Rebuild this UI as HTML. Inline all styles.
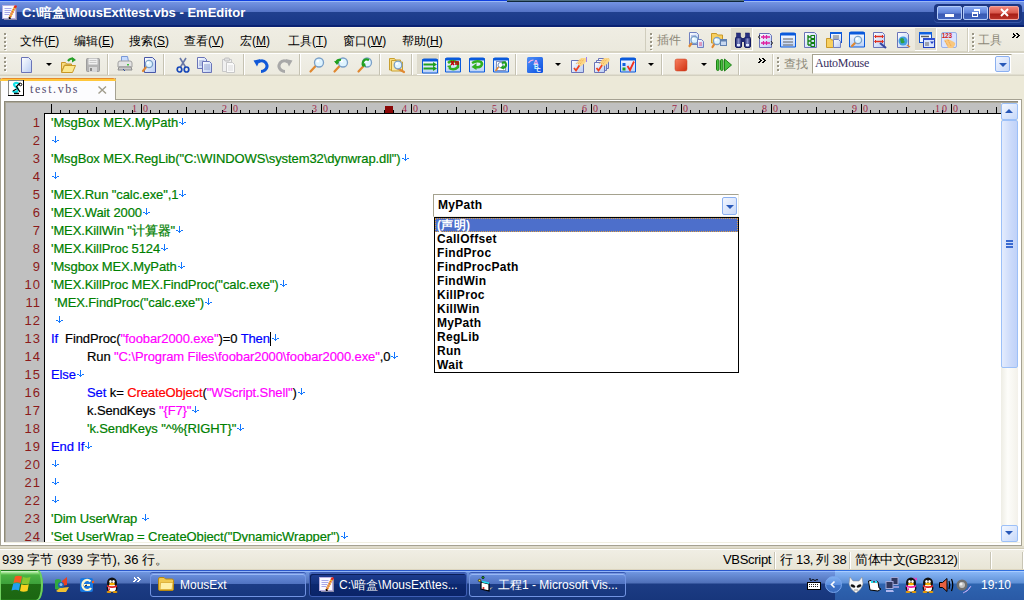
<!DOCTYPE html><html><head><meta charset="utf-8"><style>
*{margin:0;padding:0;box-sizing:border-box}
html,body{width:1024px;height:600px;overflow:hidden;background:#ECE9D8;font-family:"Liberation Sans",sans-serif;position:relative}
.a{position:absolute}
svg{position:absolute;overflow:visible}
.menu{position:absolute;top:33px;font-size:12px;line-height:14px;color:#000;white-space:nowrap}
.grip{position:absolute;width:2px;background:repeating-linear-gradient(#9A9686 0,#9A9686 2px,transparent 2px,transparent 4px);filter:drop-shadow(1px 1px 0 #fff)}
.sep{position:absolute;width:2px;height:21px;border-left:1px solid #C5C2B2;border-right:1px solid #fff}
.dd{position:absolute;width:0;height:0;border-left:3px solid transparent;border-right:3px solid transparent;border-top:3px solid #000}
.ln{position:absolute;left:0;width:35px;text-align:right;color:#8B1A1A;font-size:13px;line-height:18px;letter-spacing:1px}
.cl{position:absolute;left:6px;font-size:13px;line-height:18px;white-space:pre;color:#000;letter-spacing:-0.1px;-webkit-text-stroke:0.2px currentColor}
.tab{display:inline-block;width:36px}
.g{color:#008000}.b{color:#0000FF}.m{color:#FF00FF}.r{color:#FF0000}
.ar{display:inline-block;position:relative;width:8px;height:7px;vertical-align:2px;margin-left:1px}
.ar0{margin-left:1px}
.ar i{position:absolute;left:0;top:0;width:1px;height:1px;box-shadow:3px 0 #1478FF,3px 1px #1478FF,3px 2px #1478FF,3px 3px #1478FF,3px 4px #1478FF,3px 5px #1478FF,3px 6px #1478FF,0 4px #1478FF,1px 4px #1478FF,5px 4px #1478FF,6px 4px #1478FF,2px 5px #1478FF,4px 5px #1478FF}
.st{position:absolute;top:552px;font-size:13px;line-height:15px;color:#000;white-space:nowrap}
.ssep{position:absolute;top:552px;width:2px;height:17px;border-left:1px solid #C8C5B5;border-right:1px solid #fff}
.tbtn{position:absolute;top:573px;height:24px;border:1px solid #7294E2;border-radius:3px;box-shadow:inset 0 1px 0 #98B8F4,0 -1px 0 #3858B0;background:linear-gradient(#6A90DE,#5072C0 10px,#1C3C86 10px,#17377E)}
.tt{position:absolute;top:578px;font-size:12px;line-height:14px;color:#fff;white-space:nowrap}
.chev{position:absolute;width:1px;height:1px;box-shadow:0px 0px #000,1px 0px #000,1px 1px #000,2px 1px #000,2px 2px #000,3px 2px #000,1px 3px #000,2px 3px #000,0px 4px #000,1px 4px #000,4px 0px #000,5px 0px #000,5px 1px #000,6px 1px #000,6px 2px #000,7px 2px #000,5px 3px #000,6px 3px #000,4px 4px #000,5px 4px #000}
.chevw{position:absolute;width:1px;height:1px;box-shadow:0px 0px #fff,1px 0px #fff,1px 1px #fff,2px 1px #fff,2px 2px #fff,3px 2px #fff,1px 3px #fff,2px 3px #fff,0px 4px #fff,1px 4px #fff,4px 0px #fff,5px 0px #fff,5px 1px #fff,6px 1px #fff,6px 2px #fff,7px 2px #fff,5px 3px #fff,6px 3px #fff,4px 4px #fff,5px 4px #fff}
.item{position:absolute;left:436px;width:301px;height:14px;font-size:12px;line-height:14px;font-weight:bold;color:#000;padding-left:1px;white-space:nowrap;letter-spacing:0.3px}
</style></head><body>
<div class="a" style="left:0;top:0;width:1024px;height:27px;background:linear-gradient(#1040E0 0,#1040E0 1px,#9AB8F5 1px,#9AB8F5 2px,#7494E2 2px,#5473C6 12px,#20408F 12px,#183787 25px,#0A2272 25px,#0A2272 27px)"></div>
<div class="a" style="left:507px;top:0;width:237px;height:2px;background:linear-gradient(#4F6E80 0,#4F6E80 1px,#102838 1px)"></div>
<div class="a" style="left:22px;top:5px;color:#fff;font-weight:bold;font-size:13px;line-height:16px;white-space:nowrap">C:\暗盒\MousExt\test.vbs - EmEditor</div>
<svg style="left:1px;top:5px" width="17" height="16" viewBox="0 0 17 16"><rect x="3" y="2" width="13" height="13" fill="#8A8AA8"/><rect x="1.5" y="0.5" width="13" height="13" fill="#FAFAFF" stroke="#B8B0E0"/><path d="M3.5 3.5h7M3.5 5.5h7M3.5 7.5h6M3.5 9.5h5" stroke="#A8A8E8"/><path d="M14.5 1 L8.5 13" stroke="#F0D020" stroke-width="2.4" stroke-dasharray="1.2 1.2"/><path d="M14.5 1 L8.5 13" stroke="#E04820" stroke-width="2.4" stroke-dasharray="1.2 1.2" stroke-dashoffset="1.2"/><circle cx="14.5" cy="1.5" r="1.3" fill="#E02020"/><path d="M8 12.5 l0.5 1.5 l1 -1z" fill="#000" stroke="#000"/></svg>
<div class="a" style="left:934px;top:4px;width:88px;height:18px;border-radius:4px;background:#1B3683;box-shadow:0 1px 0 #3A58A8"></div>
<div class="a" style="left:937px;top:6px;width:25px;height:14px;border:1px solid #B4CCF8;border-radius:2px;background:linear-gradient(#86A8F2 0,#5E82D8 6px,#3A5AB2 7px,#4064BE 100%)"></div>
<div class="a" style="left:963px;top:6px;width:25px;height:14px;border:1px solid #B4CCF8;border-radius:2px;background:linear-gradient(#86A8F2 0,#5E82D8 6px,#3A5AB2 7px,#4064BE 100%)"></div>
<div class="a" style="left:989px;top:6px;width:30px;height:14px;border:1px solid #F4A49C;border-radius:2px;background:linear-gradient(#F08478 0,#D8584C 6px,#A81E16 7px,#B83228 100%)"></div>
<div class="a" style="left:945px;top:14px;width:9px;height:3px;background:#fff"></div>
<div class="a" style="left:974px;top:9px;width:6px;height:5px;border-top:2px solid #fff;border-right:1px solid #fff"></div><div class="a" style="left:972px;top:12px;width:6px;height:5px;border:1px solid #fff;border-top-width:2px;background:#3E5EB8"></div>
<svg style="left:1000px;top:8px" width="9" height="9" viewBox="0 0 9 9"><path d="M1 1L8 8M8 1L1 8" stroke="#fff" stroke-width="2"/></svg>
<div class="a" style="left:0;top:27px;width:646px;height:26px;background:linear-gradient(#F7F5EC 0,#F7F5EC 1px,#EFEDE3 1px,#EBE9DD 24px,#D6D3C3 24px)"></div>
<div class="a" style="left:646px;top:27px;width:378px;height:26px;background:linear-gradient(#F7F5EC 0,#F7F5EC 2px,#EFEDE3 2px,#EBE9DD 24px,#D6D3C3 24px)"></div>
<div class="a" style="left:645px;top:28px;width:1px;height:24px;background:#D0CDBD"></div>
<div class="a" style="left:967px;top:28px;width:1px;height:24px;background:#D0CDBD"></div><div class="a" style="left:968px;top:28px;width:1px;height:24px;background:#fff"></div>
<div class="grip" style="left:4px;top:33px;height:17px"></div>
<div class="menu" style="left:20px;top:34px">文件(<u>F</u>)</div>
<div class="menu" style="left:74px;top:34px">编辑(<u>E</u>)</div>
<div class="menu" style="left:129px;top:34px">搜索(<u>S</u>)</div>
<div class="menu" style="left:184px;top:34px">查看(<u>V</u>)</div>
<div class="menu" style="left:240px;top:34px">宏(<u>M</u>)</div>
<div class="menu" style="left:288px;top:34px">工具(<u>T</u>)</div>
<div class="menu" style="left:343px;top:34px">窗口(<u>W</u>)</div>
<div class="menu" style="left:402px;top:34px">帮助(<u>H</u>)</div>
<div class="grip" style="left:650px;top:33px;height:17px"></div>
<div class="menu" style="left:657px;color:#8C8878">插件</div>
<div class="grip" style="left:972px;top:33px;height:17px"></div>
<div class="menu" style="left:978px;color:#8C8878">工具</div>
<div class="chev" style="left:1012px;top:33px"></div>
<div class="a" style="left:0;top:53px;width:774px;height:23px;background:linear-gradient(#fff 0,#fff 1px,#F0EFE7 1px,#ECEADF 21px,#D3D0C0 22px)"></div>
<div class="a" style="left:774px;top:53px;width:250px;height:23px;background:linear-gradient(#fff 0,#fff 1px,#F0EFE7 1px,#ECEADF 21px,#D3D0C0 22px)"></div>
<div class="grip" style="left:4px;top:57px;height:15px"></div>
<div class="sep" style="left:107px;top:54px"></div>
<div class="sep" style="left:163px;top:54px"></div>
<div class="sep" style="left:243px;top:54px"></div>
<div class="sep" style="left:299px;top:54px"></div>
<div class="sep" style="left:379px;top:54px"></div>
<div class="sep" style="left:411px;top:54px"></div>
<div class="sep" style="left:515px;top:54px"></div>
<div class="sep" style="left:661px;top:54px"></div>
<div class="sep" style="left:738px;top:54px"></div>
<div class="a" style="left:772px;top:54px;width:1px;height:21px;background:#D0CDBD"></div><div class="a" style="left:773px;top:54px;width:1px;height:21px;background:#fff"></div>
<div class="grip" style="left:777px;top:57px;height:15px"></div>
<div class="menu" style="left:784px;top:57px;color:#8C8878">查找</div>
<div class="dd" style="left:46px;top:63px"></div>
<div class="dd" style="left:555px;top:63px"></div>
<div class="dd" style="left:648px;top:63px"></div>
<div class="dd" style="left:701px;top:63px"></div>
<div class="chev" style="left:758px;top:58px"></div>
<div class="a" style="left:812px;top:54px;width:200px;height:20px;background:#fff;border:1px solid #A5A28F;border-right-color:#F0EEE4;border-bottom-color:#F0EEE4"></div>
<div class="a" style="left:815px;top:56px;font-family:'Liberation Serif',serif;font-size:12px;line-height:14px;color:#383060;letter-spacing:-0.3px">AutoMouse</div>
<div class="a" style="left:995px;top:56px;width:15px;height:16px;border:1px solid #8BB0F0;border-radius:2px;background:linear-gradient(135deg,#F2F6FF,#C8D8F8)"></div>
<div class="dd" style="left:999px;top:63px;border-left-width:4px;border-right-width:4px;border-top:4px solid #2858B8"></div>
<div class="a" style="left:417px;top:54px;width:23px;height:21px;background:#DEDBCD;border-right:1px solid #fff;border-bottom:1px solid #fff"></div>
<div class="a" style="left:731px;top:28px;width:22px;height:23px;background:#DEDBCD;border-right:1px solid #fff;border-bottom:1px solid #fff"></div>
<div class="a" style="left:915px;top:28px;width:22px;height:23px;background:#DEDBCD;border-right:1px solid #fff;border-bottom:1px solid #fff"></div>
<svg style="left:18px;top:57px" width="16" height="16" viewBox="0 0 16 16"><defs><linearGradient id="wg" x1="0" y1="0" x2="0" y2="1"><stop offset="0" stop-color="#fff"/><stop offset="1" stop-color="#B8D0F8"/></linearGradient><linearGradient id="pg" x1="0" y1="0" x2="1" y2="1"><stop offset="0" stop-color="#fff"/><stop offset="1" stop-color="#B8CCF4"/></linearGradient></defs><path d="M3.5 0.5 h7 l3 3 v12 h-10z" fill="url(#pg)" stroke="#6A74B8"/></svg>
<svg style="left:61px;top:57px" width="16" height="16" viewBox="0 0 16 16"><path d="M0.5 5.5h4l1 1.5h5v1H3.5l-3 7z" fill="#F8DC80" stroke="#C89828"/><path d="M0.5 15.5l3 -7h11l-3 7z" fill="#FCE890" stroke="#C89828"/><path d="M7 4 q3 -4 6 -1" stroke="#28A028" stroke-width="2.2" fill="none"/><path d="M11 0 l4 3 l-4 2.5z" fill="#28A028"/></svg>
<svg style="left:85px;top:57px" width="16" height="16" viewBox="0 0 16 16"><rect x="1.5" y="1.5" width="13" height="13" rx="1" fill="#B4B4B4" stroke="#9C9C9C"/><rect x="3.5" y="1.5" width="9" height="6" fill="#F0F0F0"/><path d="M4.5 3.5h7M4.5 5.5h7" stroke="#C8C8C8"/><rect x="4" y="10" width="8" height="5" fill="#D8D8D8"/><rect x="5" y="11" width="2" height="3" fill="#888"/></svg>
<svg style="left:117px;top:56px" width="16" height="16" viewBox="0 0 16 16"><path d="M4.5 0.5h6l1 5h-7z" fill="#C8DCFF" stroke="#7898D8"/><path d="M1 7 q0 -2 2 -2 h10 q2 0 2 2 v4 h-14z" fill="#E4E4E4" stroke="#A0A0A0"/><path d="M2 11h12l1 3h-14z" fill="#C8C8C8" stroke="#909090"/><rect x="10" y="8" width="2" height="1.5" fill="#40C040"/><path d="M6 13l2 2" stroke="#3050A0"/></svg>
<svg style="left:141px;top:57px" width="16" height="16" viewBox="0 0 16 16"><defs><linearGradient id="wg" x1="0" y1="0" x2="0" y2="1"><stop offset="0" stop-color="#fff"/><stop offset="1" stop-color="#B8D0F8"/></linearGradient><linearGradient id="pg" x1="0" y1="0" x2="1" y2="1"><stop offset="0" stop-color="#fff"/><stop offset="1" stop-color="#B8CCF4"/></linearGradient></defs><path d="M3.5 0.5 h8 l3 3 v12 h-11z" fill="url(#pg)" stroke="#4858A8"/><path d="M5.84 9.16 L2 14" stroke="#E08830" stroke-width="2.2" stroke-linecap="round"/><circle cx="8" cy="7" r="3.6" fill="#DFF4FF" stroke="#7AA0C8" stroke-width="1.3"/><circle cx="6.8" cy="5.8" r="1.3" fill="#fff"/></svg>
<svg style="left:175px;top:57px" width="16" height="16" viewBox="0 0 16 16"><path d="M5 1l5.5 9M11 1l-5.5 9" stroke="#6878A8" stroke-width="1.6"/><ellipse cx="4.5" cy="12.5" rx="2.3" ry="2.5" fill="none" stroke="#1848B8" stroke-width="1.7"/><ellipse cx="11.5" cy="12.5" rx="2.3" ry="2.5" fill="none" stroke="#1848B8" stroke-width="1.7"/></svg>
<svg style="left:197px;top:57px" width="16" height="16" viewBox="0 0 16 16"><defs><linearGradient id="wg" x1="0" y1="0" x2="0" y2="1"><stop offset="0" stop-color="#fff"/><stop offset="1" stop-color="#B8D0F8"/></linearGradient><linearGradient id="pg" x1="0" y1="0" x2="1" y2="1"><stop offset="0" stop-color="#fff"/><stop offset="1" stop-color="#B8CCF4"/></linearGradient></defs><path d="M0.5 0.5 h7 l2 2 v9 h-9z" fill="url(#pg)" stroke="#6A74B8"/><path d="M2 4h5M2 6h5M2 8h5" stroke="#90A0D0"/><path d="M5.5 4.5 h7 l2 2 v9 h-9z" fill="url(#pg)" stroke="#6A74B8"/><path d="M7 8h6M7 10h6M7 12h6" stroke="#90A0D0"/></svg>
<svg style="left:221px;top:57px" width="16" height="16" viewBox="0 0 16 16"><path d="M1.5 2.5h9v12h-9z" fill="#F0F0F0" stroke="#C8C8C8"/><rect x="3.5" y="1" width="5" height="3" rx="1" fill="#E0E0E0" stroke="#C0C0C0"/><path d="M5.5 5.5h6l2 2v8h-8z" fill="#FAFAFA" stroke="#C8C8C8"/><path d="M7 9h5M7 11h5M7 13h5" stroke="#DCDCDC"/></svg>
<svg style="left:253px;top:57px" width="16" height="16" viewBox="0 0 16 16"><path d="M5 5 q5 -3 8 1 q2.5 4 -1 7 q-2 1.5 -4 1.5" stroke="#1058D8" stroke-width="3" fill="none"/><path d="M0.5 3.5 L7.5 2 L4 9.5z" fill="#1058D8"/></svg>
<svg style="left:277px;top:57px" width="16" height="16" viewBox="0 0 16 16"><path d="M11 5 q-5 -3 -8 1 q-2.5 4 1 7 q2 1.5 4 1.5" stroke="#A8A8A8" stroke-width="3" fill="none"/><path d="M15.5 3.5 L8.5 2 L12 9.5z" fill="#A8A8A8"/></svg>
<svg style="left:309px;top:57px" width="16" height="16" viewBox="0 0 16 16"><path d="M7.300000000000001 8.2 L1.5 14.5" stroke="#E08830" stroke-width="2.2" stroke-linecap="round"/><circle cx="10" cy="5.5" r="4.5" fill="#DFF4FF" stroke="#7AA0C8" stroke-width="1.3"/><circle cx="8.8" cy="4.3" r="1.3" fill="#fff"/></svg>
<svg style="left:333px;top:57px" width="16" height="16" viewBox="0 0 16 16"><path d="M7.300000000000001 8.2 L1.5 14.5" stroke="#E08830" stroke-width="2.2" stroke-linecap="round"/><circle cx="10" cy="5.5" r="4.5" fill="#DFF4FF" stroke="#7AA0C8" stroke-width="1.3"/><circle cx="8.8" cy="4.3" r="1.3" fill="#fff"/><path d="M3 6 q1 -4 5 -3" stroke="#20A020" stroke-width="2.2" fill="none"/><path d="M1 4 l3 4 l2.5 -3.5z" fill="#20A020"/></svg>
<svg style="left:357px;top:57px" width="16" height="16" viewBox="0 0 16 16"><path d="M7.300000000000001 8.2 L1.5 14.5" stroke="#E08830" stroke-width="2.2" stroke-linecap="round"/><circle cx="10" cy="5.5" r="4.5" fill="#DFF4FF" stroke="#7AA0C8" stroke-width="1.3"/><circle cx="8.8" cy="4.3" r="1.3" fill="#fff"/><path d="M12 3 q-4 -2 -6 2 q-1 3 1 4" stroke="#20A020" stroke-width="2.2" fill="none"/><path d="M4.5 8 l4.5 2 l-1 -4z" fill="#20A020"/></svg>
<svg style="left:389px;top:57px" width="16" height="16" viewBox="0 0 16 16"><path d="M0.5 1.5h5l1 1.5h5v10h-11z" fill="#F8DC80" stroke="#C8A030"/><path d="M2.5 3.5h5l1 1.5h5v9h-11z" fill="#FCE8A0" stroke="#C8A030"/><path d="M6.720000000000001 10.28 L15 15" stroke="#E08830" stroke-width="2.2" stroke-linecap="round"/><circle cx="9" cy="8" r="3.8" fill="#DFF4FF" stroke="#7AA0C8" stroke-width="1.3"/><circle cx="7.8" cy="6.8" r="1.3" fill="#fff"/></svg>
<svg style="left:422px;top:58px" width="16" height="16" viewBox="0 0 16 16"><defs><linearGradient id="wg" x1="0" y1="0" x2="0" y2="1"><stop offset="0" stop-color="#fff"/><stop offset="1" stop-color="#B8D0F8"/></linearGradient><linearGradient id="pg" x1="0" y1="0" x2="1" y2="1"><stop offset="0" stop-color="#fff"/><stop offset="1" stop-color="#B8CCF4"/></linearGradient></defs><path d="M0.5 2.5 q0 -1.5 1.5 -1.5 h12 q1.5 0 1.5 1.5 v12.5 h-15z" fill="url(#wg)" stroke="#0A5ADC"/><rect x="0" y="1" width="16" height="2.5" rx="1" fill="#0A5ADC"/><path d="M1.5 6.5h11M1.5 10.5h11" stroke="#20A020" stroke-width="2"/><path d="M11 4l4 2.5-4 2.5zM11 8l4 2.5-4 2.5z" fill="#20A020"/></svg>
<svg style="left:445px;top:57px" width="16" height="16" viewBox="0 0 16 16"><defs><linearGradient id="wg" x1="0" y1="0" x2="0" y2="1"><stop offset="0" stop-color="#fff"/><stop offset="1" stop-color="#B8D0F8"/></linearGradient><linearGradient id="pg" x1="0" y1="0" x2="1" y2="1"><stop offset="0" stop-color="#fff"/><stop offset="1" stop-color="#B8CCF4"/></linearGradient></defs><path d="M0.5 2.5 q0 -1.5 1.5 -1.5 h12 q1.5 0 1.5 1.5 v12.5 h-15z" fill="url(#wg)" stroke="#0A5ADC"/><rect x="0" y="1" width="16" height="2.5" rx="1" fill="#0A5ADC"/><path d="M3 6 q4 -4 10 0 v4 q-4 4 -9 1" stroke="#30B020" stroke-width="2.5" fill="none"/><path d="M2 9 l4 -1 l0 5z" fill="#30B020"/><path d="M6 4l3 4M9 4l-3 4" stroke="#C00000" stroke-width="1.5"/><path d="M10 5h4M10 7h4" stroke="#C00000" stroke-width="1.3"/></svg>
<svg style="left:469px;top:57px" width="16" height="16" viewBox="0 0 16 16"><defs><linearGradient id="wg" x1="0" y1="0" x2="0" y2="1"><stop offset="0" stop-color="#fff"/><stop offset="1" stop-color="#B8D0F8"/></linearGradient><linearGradient id="pg" x1="0" y1="0" x2="1" y2="1"><stop offset="0" stop-color="#fff"/><stop offset="1" stop-color="#B8CCF4"/></linearGradient></defs><path d="M0.5 2.5 q0 -1.5 1.5 -1.5 h12 q1.5 0 1.5 1.5 v12.5 h-15z" fill="url(#wg)" stroke="#0A5ADC"/><rect x="0" y="1" width="16" height="2.5" rx="1" fill="#0A5ADC"/><path d="M3 6 q5 -3 9 -1 q2 2 0 4 q-2 2 -6 1" stroke="#30B020" stroke-width="2.5" fill="none"/><path d="M2.5 10 l5 -4 l0 7z" fill="#30B020"/></svg>
<svg style="left:493px;top:57px" width="16" height="16" viewBox="0 0 16 16"><defs><linearGradient id="wg" x1="0" y1="0" x2="0" y2="1"><stop offset="0" stop-color="#fff"/><stop offset="1" stop-color="#B8D0F8"/></linearGradient><linearGradient id="pg" x1="0" y1="0" x2="1" y2="1"><stop offset="0" stop-color="#fff"/><stop offset="1" stop-color="#B8CCF4"/></linearGradient></defs><path d="M0.5 2.5 q0 -1.5 1.5 -1.5 h12 q1.5 0 1.5 1.5 v12.5 h-15z" fill="url(#wg)" stroke="#0A5ADC"/><rect x="0" y="1" width="16" height="2.5" rx="1" fill="#0A5ADC"/><rect x="3.5" y="4.5" width="9" height="9" fill="#fff" stroke="#8090C0"/><circle cx="7.5" cy="8" r="2.5" fill="none" stroke="#7090C0"/><path d="M5.5 10l-3 4" stroke="#E08830" stroke-width="1.5"/><path d="M9 6 q4 -2 4 2 q0 2 -3 3" stroke="#20A020" stroke-width="2.2" fill="none"/><path d="M7 11 l3.5 -3 l0.5 4.5z" fill="#20A020"/></svg>
<svg style="left:527px;top:57px" width="16" height="16" viewBox="0 0 16 16"><defs><linearGradient id="abg" x1="0" y1="0" x2="1" y2="1"><stop offset="0" stop-color="#5090F8"/><stop offset="1" stop-color="#0A50E0"/></linearGradient></defs><rect x="0" y="0" width="16" height="16" rx="1.5" fill="url(#abg)"/><path d="M1.5 6 q2 -3 5 -3" stroke="#F8B0E0" stroke-width="1.2" fill="none"/><text x="6" y="7.5" font-size="7.5" font-weight="bold" fill="#F8B8E8" font-family="Liberation Sans">A</text><text x="7" y="12" font-size="6.5" font-weight="bold" fill="#C8F8FF" font-family="Liberation Sans">B</text><text x="9.5" y="15" font-size="6" font-weight="bold" fill="#fff" font-family="Liberation Sans">C</text></svg>
<svg style="left:571px;top:57px" width="16" height="16" viewBox="0 0 16 16"><defs><linearGradient id="wg" x1="0" y1="0" x2="0" y2="1"><stop offset="0" stop-color="#fff"/><stop offset="1" stop-color="#B8D0F8"/></linearGradient><linearGradient id="pg" x1="0" y1="0" x2="1" y2="1"><stop offset="0" stop-color="#fff"/><stop offset="1" stop-color="#B8CCF4"/></linearGradient></defs><path d="M0.5 3.5 h12 l0 0 v12 h-12z" fill="url(#pg)" stroke="#6A74B8"/><path d="M3 11 l2 2.5 l4 -6" stroke="#F04020" stroke-width="1.8" fill="none"/><path d="M6 6 l4 -5 h4 q2 0 1.5 2.5 l-2 3 l-4 3z" fill="#FCD888"/><path d="M5 7 l4 -5 M7 7 l4 -5 M9 7 l4 -5" stroke="#F0A850" stroke-width="1" stroke-dasharray="1 1"/><path d="M15.5 0v5" stroke="#A080F0"/></svg>
<svg style="left:594px;top:57px" width="16" height="16" viewBox="0 0 16 16"><defs><linearGradient id="wg" x1="0" y1="0" x2="0" y2="1"><stop offset="0" stop-color="#fff"/><stop offset="1" stop-color="#B8D0F8"/></linearGradient><linearGradient id="pg" x1="0" y1="0" x2="1" y2="1"><stop offset="0" stop-color="#fff"/><stop offset="1" stop-color="#B8CCF4"/></linearGradient></defs><path d="M4.5 1.5 h10 l0 0 v10 h-10z" fill="url(#pg)" stroke="#6A74B8"/><path d="M2.5 3.5 h10 l0 0 v10 h-10z" fill="url(#pg)" stroke="#6A74B8"/><path d="M0.5 5.5 h10 l0 0 v10 h-10z" fill="url(#pg)" stroke="#6A74B8"/><path d="M2.5 11 l2 2.5 l4 -6" stroke="#F04020" stroke-width="1.8" fill="none"/><path d="M6 6 l4 -5 h4 q2 0 1.5 2.5 l-2 3 l-4 3z" fill="#FCD888"/><path d="M5 7 l4 -5 M7 7 l4 -5 M9 7 l4 -5" stroke="#F0A850" stroke-width="1" stroke-dasharray="1 1"/></svg>
<svg style="left:620px;top:57px" width="16" height="16" viewBox="0 0 16 16"><defs><linearGradient id="wg" x1="0" y1="0" x2="0" y2="1"><stop offset="0" stop-color="#fff"/><stop offset="1" stop-color="#B8D0F8"/></linearGradient><linearGradient id="pg" x1="0" y1="0" x2="1" y2="1"><stop offset="0" stop-color="#fff"/><stop offset="1" stop-color="#B8CCF4"/></linearGradient></defs><path d="M0.5 2.5 q0 -1.5 1.5 -1.5 h12 q1.5 0 1.5 1.5 v12.5 h-15z" fill="url(#wg)" stroke="#0A5ADC"/><rect x="0" y="1" width="16" height="2.5" rx="1" fill="#0A5ADC"/><rect x="2.5" y="6" width="3" height="3" fill="#1060E0"/><rect x="2.5" y="10.5" width="3" height="3" fill="#20A020"/><path d="M7.5 9 l2.5 4 l4 -8.5" stroke="#F03020" stroke-width="1.8" fill="none"/></svg>
<svg style="left:673px;top:57px" width="16" height="16" viewBox="0 0 16 16"><defs><linearGradient id="stg" x1="0" y1="0" x2="1" y2="1"><stop offset="0" stop-color="#F88060"/><stop offset="1" stop-color="#D03010"/></linearGradient></defs><rect x="2" y="2" width="12" height="12" rx="2" fill="url(#stg)" stroke="#C84020" stroke-width="0.5"/></svg>
<svg style="left:716px;top:57px" width="16" height="16" viewBox="0 0 16 16"><rect x="0.5" y="2.5" width="2.5" height="11" rx="1.2" fill="#48C040" stroke="#208018"/><rect x="4.5" y="2.5" width="2.5" height="11" rx="1.2" fill="#48C040" stroke="#208018"/><path d="M8.5 2 l7 6 -7 6z" fill="#48C040" stroke="#208018"/></svg>
<svg style="left:688px;top:32px" width="16" height="16" viewBox="0 0 16 16"><defs><linearGradient id="wg" x1="0" y1="0" x2="0" y2="1"><stop offset="0" stop-color="#fff"/><stop offset="1" stop-color="#B8D0F8"/></linearGradient><linearGradient id="pg" x1="0" y1="0" x2="1" y2="1"><stop offset="0" stop-color="#fff"/><stop offset="1" stop-color="#B8CCF4"/></linearGradient></defs><path d="M1.5 0.5 h7 l2 2 v10 h-9z" fill="url(#pg)" stroke="#7080C0"/><path d="M3 4h5M3 6h5" stroke="#8090D0"/><path d="M4.4 10.1 L1.5 14" stroke="#E08830" stroke-width="2.2" stroke-linecap="round"/><circle cx="6.5" cy="8" r="3.5" fill="#DFF4FF" stroke="#7AA0C8" stroke-width="1.3"/><circle cx="5.3" cy="6.8" r="1.3" fill="#fff"/><path d="M9.5 7.5 h4 l2 2 v6 h-6z" fill="url(#pg)" stroke="#7080C0"/><path d="M11 11h3M11 13h3" stroke="#E05080"/></svg>
<svg style="left:711px;top:32px" width="16" height="16" viewBox="0 0 16 16"><path d="M0.5 1.5h5l1 1.5h5v8h-11z" fill="#F8D060" stroke="#C89828"/><path d="M3.9 11.1 L1.5 15" stroke="#E08830" stroke-width="2.2" stroke-linecap="round"/><circle cx="6" cy="9" r="3.5" fill="#DFF4FF" stroke="#7AA0C8" stroke-width="1.3"/><circle cx="4.8" cy="7.8" r="1.3" fill="#fff"/><rect x="9.5" y="7.5" width="6" height="6" fill="#C8D8F0" stroke="#6080B0"/><rect x="10" y="8" width="5" height="1.5" fill="#6080B0"/></svg>
<svg style="left:735px;top:32px" width="16" height="16" viewBox="0 0 16 16"><defs><linearGradient id="bng" x1="0" y1="0" x2="1" y2="0"><stop offset="0" stop-color="#202870"/><stop offset="0.5" stop-color="#8890C8"/><stop offset="1" stop-color="#202870"/></linearGradient></defs><rect x="0.5" y="5" width="6" height="10.5" rx="1.5" fill="url(#bng)" stroke="#101860"/><rect x="9.5" y="5" width="6" height="10.5" rx="1.5" fill="url(#bng)" stroke="#101860"/><rect x="1.5" y="1" width="4" height="5" fill="#283080" stroke="#101860" stroke-width="0.5"/><rect x="10.5" y="1" width="4" height="5" fill="#283080" stroke="#101860" stroke-width="0.5"/><rect x="6" y="6" width="4" height="4" fill="#202870"/><rect x="2" y="12" width="3" height="2" fill="#E0E8FF"/><rect x="11" y="12" width="3" height="2" fill="#E0E8FF"/></svg>
<svg style="left:758px;top:32px" width="16" height="16" viewBox="0 0 16 16"><defs><linearGradient id="wg" x1="0" y1="0" x2="0" y2="1"><stop offset="0" stop-color="#fff"/><stop offset="1" stop-color="#B8D0F8"/></linearGradient><linearGradient id="pg" x1="0" y1="0" x2="1" y2="1"><stop offset="0" stop-color="#fff"/><stop offset="1" stop-color="#B8CCF4"/></linearGradient></defs><path d="M1.5 1.5 h10 l2 2 v12 h-12z" fill="url(#pg)" stroke="#6A74B8"/><path d="M3 5h9M3 11h9" stroke="#E020A0" stroke-width="1.3"/><path d="M5.5 3v4M8.5 3v4M5.5 9v4M8.5 9v4" stroke="#E020A0" stroke-width="1.2"/><path d="M2 3 l-1.5 2 l1.5 2M13 9 l1.5 2 l-1.5 2" stroke="#202020" fill="none"/></svg>
<svg style="left:780px;top:32px" width="16" height="16" viewBox="0 0 16 16"><defs><linearGradient id="wg" x1="0" y1="0" x2="0" y2="1"><stop offset="0" stop-color="#fff"/><stop offset="1" stop-color="#B8D0F8"/></linearGradient><linearGradient id="pg" x1="0" y1="0" x2="1" y2="1"><stop offset="0" stop-color="#fff"/><stop offset="1" stop-color="#B8CCF4"/></linearGradient></defs><path d="M0.5 2.5 q0 -1.5 1.5 -1.5 h12 q1.5 0 1.5 1.5 v12.5 h-15z" fill="url(#wg)" stroke="#0A5ADC"/><rect x="0" y="1" width="16" height="2.5" rx="1" fill="#0A5ADC"/><path d="M3 7h10M3 10h10M3 13h10" stroke="#606060" stroke-width="1.2"/></svg>
<svg style="left:804px;top:32px" width="16" height="16" viewBox="0 0 16 16"><defs><linearGradient id="wg" x1="0" y1="0" x2="0" y2="1"><stop offset="0" stop-color="#fff"/><stop offset="1" stop-color="#B8D0F8"/></linearGradient><linearGradient id="pg" x1="0" y1="0" x2="1" y2="1"><stop offset="0" stop-color="#fff"/><stop offset="1" stop-color="#B8CCF4"/></linearGradient></defs><path d="M0.5 0.5 h10 l2 2 v13 h-12z" fill="url(#pg)" stroke="#6A74B8"/><path d="M4 3v10M4 5h3M4 9h3M4 13h3" stroke="#108010" stroke-width="1.3"/><rect x="7" y="3.5" width="3.5" height="3" fill="none" stroke="#108010"/><rect x="7" y="7.5" width="3.5" height="3" fill="none" stroke="#108010"/><rect x="7" y="11.5" width="3.5" height="3" fill="none" stroke="#108010"/></svg>
<svg style="left:826px;top:32px" width="16" height="16" viewBox="0 0 16 16"><defs><linearGradient id="wg" x1="0" y1="0" x2="0" y2="1"><stop offset="0" stop-color="#fff"/><stop offset="1" stop-color="#B8D0F8"/></linearGradient><linearGradient id="pg" x1="0" y1="0" x2="1" y2="1"><stop offset="0" stop-color="#fff"/><stop offset="1" stop-color="#B8CCF4"/></linearGradient></defs><rect x="4.5" y="0.5" width="11" height="10" fill="url(#wg)" stroke="#1050D0"/><rect x="4" y="0" width="12" height="2" fill="#1060E0"/><path d="M7 4h6M7 6h6" stroke="#707070"/><path d="M0.5 6.5h4l1 1.5h4v7.5h-9z" fill="#F8D060" stroke="#C89828"/><path d="M7.5 7.5 h5 l2 2 v6 h-7z" fill="url(#pg)" stroke="#7080C0"/></svg>
<svg style="left:849px;top:32px" width="16" height="16" viewBox="0 0 16 16"><defs><linearGradient id="wg" x1="0" y1="0" x2="0" y2="1"><stop offset="0" stop-color="#fff"/><stop offset="1" stop-color="#B8D0F8"/></linearGradient><linearGradient id="pg" x1="0" y1="0" x2="1" y2="1"><stop offset="0" stop-color="#fff"/><stop offset="1" stop-color="#B8CCF4"/></linearGradient></defs><path d="M0.5 1.5 q0 -1.5 1.5 -1.5 h12 q1.5 0 1.5 1.5 v13.5 h-15z" fill="url(#wg)" stroke="#0A5ADC"/><rect x="0" y="0" width="16" height="2.5" rx="1" fill="#0A5ADC"/><path d="M6.84 10.16 L3 14" stroke="#E08830" stroke-width="2.2" stroke-linecap="round"/><circle cx="9" cy="8" r="3.6" fill="#DFF4FF" stroke="#7AA0C8" stroke-width="1.3"/><circle cx="7.8" cy="6.8" r="1.3" fill="#fff"/></svg>
<svg style="left:872px;top:32px" width="16" height="16" viewBox="0 0 16 16"><defs><linearGradient id="wg" x1="0" y1="0" x2="0" y2="1"><stop offset="0" stop-color="#fff"/><stop offset="1" stop-color="#B8D0F8"/></linearGradient><linearGradient id="pg" x1="0" y1="0" x2="1" y2="1"><stop offset="0" stop-color="#fff"/><stop offset="1" stop-color="#B8CCF4"/></linearGradient></defs><path d="M1.5 0.5 h9 l2 2 v13 h-11z" fill="url(#pg)" stroke="#6A74B8"/><path d="M3 4.5h8M3 9.5h8" stroke="#E03020" stroke-width="1.4"/><path d="M4 3l-1.5 1.5 1.5 1.5M10 3l1.5 1.5-1.5 1.5M4 8l-1.5 1.5 1.5 1.5M10 8l1.5 1.5-1.5 1.5" stroke="#E03020" fill="none"/><path d="M8 11 l6 5" stroke="#3848A0" stroke-width="2.2"/></svg>
<svg style="left:896px;top:32px" width="16" height="16" viewBox="0 0 16 16"><defs><linearGradient id="wg" x1="0" y1="0" x2="0" y2="1"><stop offset="0" stop-color="#fff"/><stop offset="1" stop-color="#B8D0F8"/></linearGradient><linearGradient id="pg" x1="0" y1="0" x2="1" y2="1"><stop offset="0" stop-color="#fff"/><stop offset="1" stop-color="#B8CCF4"/></linearGradient></defs><path d="M1.5 0.5 h9 l2 2 v13 h-11z" fill="url(#pg)" stroke="#6A74B8"/><circle cx="7" cy="9" r="4.5" fill="#40A0E0"/><path d="M4 7 q2 -2 4 0 q-1 2 1 3 q-2 2 -4 1z" fill="#30A040"/><path d="M11 13l3 2" stroke="#E08830" stroke-width="1.5"/></svg>
<svg style="left:919px;top:32px" width="16" height="16" viewBox="0 0 16 16"><defs><linearGradient id="wg" x1="0" y1="0" x2="0" y2="1"><stop offset="0" stop-color="#fff"/><stop offset="1" stop-color="#B8D0F8"/></linearGradient><linearGradient id="pg" x1="0" y1="0" x2="1" y2="1"><stop offset="0" stop-color="#fff"/><stop offset="1" stop-color="#B8CCF4"/></linearGradient></defs><rect x="0.5" y="0.5" width="12" height="10" fill="#F0F6FF" stroke="#1050D0"/><rect x="0" y="0" width="13" height="2.5" fill="#1060E0"/><path d="M2 4.5h8" stroke="#606060" stroke-width="1.5"/><rect x="4.5" y="6.5" width="11" height="9" fill="#D8E4FF" stroke="#2040C0"/><rect x="4" y="6" width="12" height="2" fill="#3050D0"/><path d="M11 9.5h4l-2 2.5z" fill="#2040C0"/><path d="M6 11h4M6 13h4" stroke="#606060"/></svg>
<svg style="left:941px;top:32px" width="16" height="16" viewBox="0 0 16 16"><rect x="0.5" y="0.5" width="15" height="15" rx="1.5" fill="#D8E4FF" stroke="#98B0E8"/><text x="0.8" y="6.2" font-size="6.5" font-weight="bold" fill="#D02020" font-family="Liberation Sans" letter-spacing="-0.3">123</text><path d="M3 8 l4 -1 l6 3 q2 1 1 3 l-2 3 h-5z" fill="#F8C880"/><path d="M4 9 l3 5 M7 8 l3 6" stroke="#F0A040" stroke-dasharray="1 1"/></svg>
<div class="a" style="left:0;top:99px;width:1022px;height:447px;background:#fff;border:1px solid #A5A192"></div>
<div class="a" style="left:0;top:78px;width:116px;height:22px;background:#FCFCFE;border-left:1px solid #A5A192;border-right:1px solid #A5A192"></div>
<div class="a" style="left:0;top:78px;width:116px;height:3px;background:linear-gradient(#E68B2C 0,#E68B2C 1px,#FFC73C 1px);border-radius:3px 3px 0 0"></div>
<svg style="left:8px;top:80px" width="16" height="16" viewBox="0 0 16 16"><rect x="0" y="0" width="16" height="16" fill="#000"/><rect x="0" y="0" width="15" height="15" fill="#888"/><rect x="1" y="1" width="14" height="14" fill="#fff"/><path d="M11.5 4.5 Q9 2 6.5 3.5 Q5 5 8 7 Q11 9 9 11.5 Q7 13 4.5 11" stroke="#10E0E8" stroke-width="2.2" fill="none"/><path d="M12 3 L8.5 6.5 L12 12 M5 11 L8.5 9" stroke="#000" stroke-width="1.3" fill="none"/><circle cx="12.5" cy="4.5" r="1.3" fill="none" stroke="#000"/><path d="M6 13.5h5" stroke="#000" stroke-width="1.5"/></svg>
<div class="a" style="left:30px;top:82px;font-family:'Liberation Serif',serif;font-size:12px;line-height:14px;color:#585070;letter-spacing:1.6px">test.vbs</div>
<svg style="left:98px;top:86px" width="9" height="8" viewBox="0 0 9 8"><path d="M0.5 0.5L8 7.5M8 0.5L0.5 7.5" stroke="#A09C8C" stroke-width="1.4"/></svg>
<div class="a" style="left:4px;top:101px;width:1014px;height:441px;border-top:1px solid #8E8A7B;border-left:1px solid #8E8A7B"></div>
<div class="a" style="left:5px;top:102px;width:1013px;height:440px;border-top:1px solid #ACA899;border-left:1px solid #ACA899;background:#C0C0C0"></div>
<div class="a" style="left:51px;top:104px;width:1px;height:9px;background:#000"></div><div class="a" style="left:60px;top:110px;width:1px;height:3px;background:#000"></div><div class="a" style="left:69px;top:110px;width:1px;height:3px;background:#000"></div><div class="a" style="left:78px;top:110px;width:1px;height:3px;background:#000"></div><div class="a" style="left:87px;top:110px;width:1px;height:3px;background:#000"></div><div class="a" style="left:96px;top:107px;width:1px;height:6px;background:#000"></div><div class="a" style="left:105px;top:110px;width:1px;height:3px;background:#000"></div><div class="a" style="left:114px;top:110px;width:1px;height:3px;background:#000"></div><div class="a" style="left:123px;top:110px;width:1px;height:3px;background:#000"></div><div class="a" style="left:132px;top:110px;width:1px;height:3px;background:#000"></div><div class="a" style="left:141px;top:104px;width:1px;height:9px;background:#000"></div><div class="a" style="left:132px;top:104px;width:7px;text-align:right;font-family:'Liberation Serif',serif;font-size:10px;line-height:10px;color:#A02848;letter-spacing:2px;white-space:nowrap">1</div><div class="a" style="left:143px;top:104px;font-family:'Liberation Serif',serif;font-size:10px;line-height:10px;color:#A02848">0</div><div class="a" style="left:150px;top:110px;width:1px;height:3px;background:#000"></div><div class="a" style="left:159px;top:110px;width:1px;height:3px;background:#000"></div><div class="a" style="left:168px;top:110px;width:1px;height:3px;background:#000"></div><div class="a" style="left:177px;top:110px;width:1px;height:3px;background:#000"></div><div class="a" style="left:186px;top:107px;width:1px;height:6px;background:#000"></div><div class="a" style="left:195px;top:110px;width:1px;height:3px;background:#000"></div><div class="a" style="left:204px;top:110px;width:1px;height:3px;background:#000"></div><div class="a" style="left:213px;top:110px;width:1px;height:3px;background:#000"></div><div class="a" style="left:222px;top:110px;width:1px;height:3px;background:#000"></div><div class="a" style="left:231px;top:104px;width:1px;height:9px;background:#000"></div><div class="a" style="left:222px;top:104px;width:7px;text-align:right;font-family:'Liberation Serif',serif;font-size:10px;line-height:10px;color:#A02848;letter-spacing:2px;white-space:nowrap">2</div><div class="a" style="left:233px;top:104px;font-family:'Liberation Serif',serif;font-size:10px;line-height:10px;color:#A02848">0</div><div class="a" style="left:240px;top:110px;width:1px;height:3px;background:#000"></div><div class="a" style="left:249px;top:110px;width:1px;height:3px;background:#000"></div><div class="a" style="left:258px;top:110px;width:1px;height:3px;background:#000"></div><div class="a" style="left:267px;top:110px;width:1px;height:3px;background:#000"></div><div class="a" style="left:276px;top:107px;width:1px;height:6px;background:#000"></div><div class="a" style="left:285px;top:110px;width:1px;height:3px;background:#000"></div><div class="a" style="left:294px;top:110px;width:1px;height:3px;background:#000"></div><div class="a" style="left:303px;top:110px;width:1px;height:3px;background:#000"></div><div class="a" style="left:312px;top:110px;width:1px;height:3px;background:#000"></div><div class="a" style="left:321px;top:104px;width:1px;height:9px;background:#000"></div><div class="a" style="left:312px;top:104px;width:7px;text-align:right;font-family:'Liberation Serif',serif;font-size:10px;line-height:10px;color:#A02848;letter-spacing:2px;white-space:nowrap">3</div><div class="a" style="left:323px;top:104px;font-family:'Liberation Serif',serif;font-size:10px;line-height:10px;color:#A02848">0</div><div class="a" style="left:330px;top:110px;width:1px;height:3px;background:#000"></div><div class="a" style="left:339px;top:110px;width:1px;height:3px;background:#000"></div><div class="a" style="left:348px;top:110px;width:1px;height:3px;background:#000"></div><div class="a" style="left:357px;top:110px;width:1px;height:3px;background:#000"></div><div class="a" style="left:366px;top:107px;width:1px;height:6px;background:#000"></div><div class="a" style="left:375px;top:110px;width:1px;height:3px;background:#000"></div><div class="a" style="left:384px;top:110px;width:1px;height:3px;background:#000"></div><div class="a" style="left:393px;top:110px;width:1px;height:3px;background:#000"></div><div class="a" style="left:402px;top:110px;width:1px;height:3px;background:#000"></div><div class="a" style="left:411px;top:104px;width:1px;height:9px;background:#000"></div><div class="a" style="left:402px;top:104px;width:7px;text-align:right;font-family:'Liberation Serif',serif;font-size:10px;line-height:10px;color:#A02848;letter-spacing:2px;white-space:nowrap">4</div><div class="a" style="left:413px;top:104px;font-family:'Liberation Serif',serif;font-size:10px;line-height:10px;color:#A02848">0</div><div class="a" style="left:420px;top:110px;width:1px;height:3px;background:#000"></div><div class="a" style="left:429px;top:110px;width:1px;height:3px;background:#000"></div><div class="a" style="left:438px;top:110px;width:1px;height:3px;background:#000"></div><div class="a" style="left:447px;top:110px;width:1px;height:3px;background:#000"></div><div class="a" style="left:456px;top:107px;width:1px;height:6px;background:#000"></div><div class="a" style="left:465px;top:110px;width:1px;height:3px;background:#000"></div><div class="a" style="left:474px;top:110px;width:1px;height:3px;background:#000"></div><div class="a" style="left:483px;top:110px;width:1px;height:3px;background:#000"></div><div class="a" style="left:492px;top:110px;width:1px;height:3px;background:#000"></div><div class="a" style="left:501px;top:104px;width:1px;height:9px;background:#000"></div><div class="a" style="left:492px;top:104px;width:7px;text-align:right;font-family:'Liberation Serif',serif;font-size:10px;line-height:10px;color:#A02848;letter-spacing:2px;white-space:nowrap">5</div><div class="a" style="left:503px;top:104px;font-family:'Liberation Serif',serif;font-size:10px;line-height:10px;color:#A02848">0</div><div class="a" style="left:510px;top:110px;width:1px;height:3px;background:#000"></div><div class="a" style="left:519px;top:110px;width:1px;height:3px;background:#000"></div><div class="a" style="left:528px;top:110px;width:1px;height:3px;background:#000"></div><div class="a" style="left:537px;top:110px;width:1px;height:3px;background:#000"></div><div class="a" style="left:546px;top:107px;width:1px;height:6px;background:#000"></div><div class="a" style="left:555px;top:110px;width:1px;height:3px;background:#000"></div><div class="a" style="left:564px;top:110px;width:1px;height:3px;background:#000"></div><div class="a" style="left:573px;top:110px;width:1px;height:3px;background:#000"></div><div class="a" style="left:582px;top:110px;width:1px;height:3px;background:#000"></div><div class="a" style="left:591px;top:104px;width:1px;height:9px;background:#000"></div><div class="a" style="left:582px;top:104px;width:7px;text-align:right;font-family:'Liberation Serif',serif;font-size:10px;line-height:10px;color:#A02848;letter-spacing:2px;white-space:nowrap">6</div><div class="a" style="left:593px;top:104px;font-family:'Liberation Serif',serif;font-size:10px;line-height:10px;color:#A02848">0</div><div class="a" style="left:600px;top:110px;width:1px;height:3px;background:#000"></div><div class="a" style="left:609px;top:110px;width:1px;height:3px;background:#000"></div><div class="a" style="left:618px;top:110px;width:1px;height:3px;background:#000"></div><div class="a" style="left:627px;top:110px;width:1px;height:3px;background:#000"></div><div class="a" style="left:636px;top:107px;width:1px;height:6px;background:#000"></div><div class="a" style="left:645px;top:110px;width:1px;height:3px;background:#000"></div><div class="a" style="left:654px;top:110px;width:1px;height:3px;background:#000"></div><div class="a" style="left:663px;top:110px;width:1px;height:3px;background:#000"></div><div class="a" style="left:672px;top:110px;width:1px;height:3px;background:#000"></div><div class="a" style="left:681px;top:104px;width:1px;height:9px;background:#000"></div><div class="a" style="left:672px;top:104px;width:7px;text-align:right;font-family:'Liberation Serif',serif;font-size:10px;line-height:10px;color:#A02848;letter-spacing:2px;white-space:nowrap">7</div><div class="a" style="left:683px;top:104px;font-family:'Liberation Serif',serif;font-size:10px;line-height:10px;color:#A02848">0</div><div class="a" style="left:690px;top:110px;width:1px;height:3px;background:#000"></div><div class="a" style="left:699px;top:110px;width:1px;height:3px;background:#000"></div><div class="a" style="left:708px;top:110px;width:1px;height:3px;background:#000"></div><div class="a" style="left:717px;top:110px;width:1px;height:3px;background:#000"></div><div class="a" style="left:726px;top:107px;width:1px;height:6px;background:#000"></div><div class="a" style="left:735px;top:110px;width:1px;height:3px;background:#000"></div><div class="a" style="left:744px;top:110px;width:1px;height:3px;background:#000"></div><div class="a" style="left:753px;top:110px;width:1px;height:3px;background:#000"></div><div class="a" style="left:762px;top:110px;width:1px;height:3px;background:#000"></div><div class="a" style="left:771px;top:104px;width:1px;height:9px;background:#000"></div><div class="a" style="left:762px;top:104px;width:7px;text-align:right;font-family:'Liberation Serif',serif;font-size:10px;line-height:10px;color:#A02848;letter-spacing:2px;white-space:nowrap">8</div><div class="a" style="left:773px;top:104px;font-family:'Liberation Serif',serif;font-size:10px;line-height:10px;color:#A02848">0</div><div class="a" style="left:780px;top:110px;width:1px;height:3px;background:#000"></div><div class="a" style="left:789px;top:110px;width:1px;height:3px;background:#000"></div><div class="a" style="left:798px;top:110px;width:1px;height:3px;background:#000"></div><div class="a" style="left:807px;top:110px;width:1px;height:3px;background:#000"></div><div class="a" style="left:816px;top:107px;width:1px;height:6px;background:#000"></div><div class="a" style="left:825px;top:110px;width:1px;height:3px;background:#000"></div><div class="a" style="left:834px;top:110px;width:1px;height:3px;background:#000"></div><div class="a" style="left:843px;top:110px;width:1px;height:3px;background:#000"></div><div class="a" style="left:852px;top:110px;width:1px;height:3px;background:#000"></div><div class="a" style="left:861px;top:104px;width:1px;height:9px;background:#000"></div><div class="a" style="left:852px;top:104px;width:7px;text-align:right;font-family:'Liberation Serif',serif;font-size:10px;line-height:10px;color:#A02848;letter-spacing:2px;white-space:nowrap">9</div><div class="a" style="left:863px;top:104px;font-family:'Liberation Serif',serif;font-size:10px;line-height:10px;color:#A02848">0</div><div class="a" style="left:870px;top:110px;width:1px;height:3px;background:#000"></div><div class="a" style="left:879px;top:110px;width:1px;height:3px;background:#000"></div><div class="a" style="left:888px;top:110px;width:1px;height:3px;background:#000"></div><div class="a" style="left:897px;top:110px;width:1px;height:3px;background:#000"></div><div class="a" style="left:906px;top:107px;width:1px;height:6px;background:#000"></div><div class="a" style="left:915px;top:110px;width:1px;height:3px;background:#000"></div><div class="a" style="left:924px;top:110px;width:1px;height:3px;background:#000"></div><div class="a" style="left:933px;top:110px;width:1px;height:3px;background:#000"></div><div class="a" style="left:942px;top:110px;width:1px;height:3px;background:#000"></div><div class="a" style="left:951px;top:104px;width:1px;height:9px;background:#000"></div><div class="a" style="left:935px;top:104px;width:14px;text-align:right;font-family:'Liberation Serif',serif;font-size:10px;line-height:10px;color:#A02848;letter-spacing:2px;white-space:nowrap">10</div><div class="a" style="left:953px;top:104px;font-family:'Liberation Serif',serif;font-size:10px;line-height:10px;color:#A02848">0</div><div class="a" style="left:960px;top:110px;width:1px;height:3px;background:#000"></div><div class="a" style="left:969px;top:110px;width:1px;height:3px;background:#000"></div><div class="a" style="left:978px;top:110px;width:1px;height:3px;background:#000"></div><div class="a" style="left:987px;top:110px;width:1px;height:3px;background:#000"></div><div class="a" style="left:996px;top:107px;width:1px;height:6px;background:#000"></div>
<div class="a" style="left:385px;top:106px;width:8px;height:7px;background:#8A0808"></div>
<div class="a" style="left:44px;top:113px;width:957px;height:429px;background:#fff;border-left:1px solid #000;border-top:1px solid #000"></div>
<div class="a" style="left:6px;top:114px;width:38px;height:428px;overflow:hidden">
<div class="ln" style="top:0px">1</div>
<div class="ln" style="top:18px">2</div>
<div class="ln" style="top:36px">3</div>
<div class="ln" style="top:54px">4</div>
<div class="ln" style="top:72px">5</div>
<div class="ln" style="top:90px">6</div>
<div class="ln" style="top:108px">7</div>
<div class="ln" style="top:126px">8</div>
<div class="ln" style="top:144px">9</div>
<div class="ln" style="top:162px">10</div>
<div class="ln" style="top:180px">11</div>
<div class="ln" style="top:198px">12</div>
<div class="ln" style="top:216px">13</div>
<div class="ln" style="top:234px">14</div>
<div class="ln" style="top:252px">15</div>
<div class="ln" style="top:270px">16</div>
<div class="ln" style="top:288px">17</div>
<div class="ln" style="top:306px">18</div>
<div class="ln" style="top:324px">19</div>
<div class="ln" style="top:342px">20</div>
<div class="ln" style="top:360px">21</div>
<div class="ln" style="top:378px">22</div>
<div class="ln" style="top:396px">23</div>
<div class="ln" style="top:414px">24</div>
</div>
<div class="a" style="left:45px;top:114px;width:956px;height:428px;overflow:hidden">
<div class="cl" style="top:0px"><span class="g">'MsgBox MEX.MyPath</span><span class="ar"><i></i></span></div>
<div class="cl" style="top:18px"><span class="ar ar0"><i></i></span></div>
<div class="cl" style="top:36px"><span class="g">'MsgBox MEX.RegLib("C:\WINDOWS\system32\dynwrap.dll")</span><span class="ar"><i></i></span></div>
<div class="cl" style="top:54px"><span class="ar ar0"><i></i></span></div>
<div class="cl" style="top:72px"><span class="g">'MEX.Run "calc.exe",1</span><span class="ar"><i></i></span></div>
<div class="cl" style="top:90px"><span class="g">'MEX.Wait 2000</span><span class="ar"><i></i></span></div>
<div class="cl" style="top:108px"><span class="g">'MEX.KillWin "计算器"</span><span class="ar"><i></i></span></div>
<div class="cl" style="top:126px"><span class="g">'MEX.KillProc 5124</span><span class="ar"><i></i></span></div>
<div class="cl" style="top:144px"><span class="g">'Msgbox MEX.MyPath</span><span class="ar"><i></i></span></div>
<div class="cl" style="top:162px"><span class="g">'MEX.KillProc MEX.FindProc("calc.exe")</span><span class="ar"><i></i></span></div>
<div class="cl" style="top:180px"> <span class="g">'MEX.FindProc("calc.exe")</span><span class="ar"><i></i></span></div>
<div class="cl" style="top:198px"> <span class="ar"><i></i></span></div>
<div class="cl" style="top:216px"><span class="b">If</span>  FindProc(<span class="m">"foobar2000.exe"</span>)=0 <span class="b">Then</span><span style="display:inline-block;width:1px;height:14px;background:#000;vertical-align:-3px"></span><span class="ar"><i></i></span></div>
<div class="cl" style="top:234px"><i class="tab"></i>Run <span class="m">"C:\Program Files\foobar2000\foobar2000.exe"</span>,0<span class="ar"><i></i></span></div>
<div class="cl" style="top:252px"><span class="b">Else</span><span class="ar"><i></i></span></div>
<div class="cl" style="top:270px"><i class="tab"></i><span class="b">Set</span> k= <span class="r">CreateObject</span>(<span class="m">"WScript.Shell"</span>)<span class="ar"><i></i></span></div>
<div class="cl" style="top:288px"><i class="tab"></i>k.SendKeys <span class="m">"{F7}"</span><span class="ar"><i></i></span></div>
<div class="cl" style="top:306px"><i class="tab"></i><span class="g">'k.SendKeys "^%{RIGHT}"</span><span class="ar"><i></i></span></div>
<div class="cl" style="top:324px"><span class="b">End If</span><span class="ar"><i></i></span></div>
<div class="cl" style="top:342px"><span class="ar ar0"><i></i></span></div>
<div class="cl" style="top:360px"><span class="ar ar0"><i></i></span></div>
<div class="cl" style="top:378px"><span class="ar ar0"><i></i></span></div>
<div class="cl" style="top:396px"><span class="g">'Dim UserWrap </span><span class="ar"><i></i></span></div>
<div class="cl" style="top:414px"><span class="g">'Set UserWrap = CreateObject("DynamicWrapper")</span><span class="ar"><i></i></span></div>
</div>
<div class="a" style="left:4px;top:542px;width:1016px;height:1px;background:#F1EFE2"></div>
<div class="a" style="left:1001px;top:103px;width:17px;height:439px;background:linear-gradient(90deg,#EEEDE5,#FDFDFA 40%,#F3F1EA)"></div>
<div class="a" style="left:1001px;top:103px;width:17px;height:17px;border:1px solid #9CC0F8;border-radius:2px;background:linear-gradient(135deg,#F4F8FF,#C6D8FA)"></div>
<div class="a" style="left:1001px;top:525px;width:17px;height:17px;border:1px solid #9CC0F8;border-radius:2px;background:linear-gradient(135deg,#F4F8FF,#C6D8FA)"></div>
<div class="dd" style="left:1005px;top:109px;border-left-width:4px;border-right-width:4px;border-top:0;border-bottom:4px solid #2858B8"></div>
<div class="dd" style="left:1005px;top:531px;border-left-width:4px;border-right-width:4px;border-top:4px solid #2858B8"></div>
<div class="a" style="left:1001px;top:120px;width:17px;height:248px;border:1px solid #9CC0F8;border-radius:2px;background:linear-gradient(90deg,#E4ECFD,#CBDAFA 60%,#C0D2F8)"></div>
<div class="a" style="left:1006px;top:240px;width:7px;height:8px;background:repeating-linear-gradient(#3A6AD0 0,#3A6AD0 2px,transparent 2px,transparent 3px)"></div>
<div class="a" style="left:433px;top:194px;width:306px;height:23px;background:#fff;border:1px solid #A5A28F;border-right-color:#F0EEE4;border-bottom-color:#F0EEE4"></div>
<div class="a" style="left:438px;top:198px;font-size:12px;line-height:14px;font-weight:bold;color:#000;letter-spacing:0.3px">MyPath</div>
<div class="a" style="left:722px;top:197px;width:15px;height:18px;border:1px solid #8BB0F0;border-radius:2px;background:linear-gradient(135deg,#F2F6FF,#C8D8F8)"></div>
<div class="dd" style="left:726px;top:205px;border-left-width:4px;border-right-width:4px;border-top:4px solid #2858B8"></div>
<div class="a" style="left:434px;top:217px;width:305px;height:156px;background:#fff;border:1px solid #000"></div>
<div class="a" style="left:435px;top:218px;width:303px;height:14px;background:#4D6FCB;outline:1px dotted #E0A040;outline-offset:-1px"></div>
<div class="item" style="top:218px;color:#fff">(声明)</div>
<div class="item" style="top:232px;color:#000">CallOffset</div>
<div class="item" style="top:246px;color:#000">FindProc</div>
<div class="item" style="top:260px;color:#000">FindProcPath</div>
<div class="item" style="top:274px;color:#000">FindWin</div>
<div class="item" style="top:288px;color:#000">KillProc</div>
<div class="item" style="top:302px;color:#000">KillWin</div>
<div class="item" style="top:316px;color:#000">MyPath</div>
<div class="item" style="top:330px;color:#000">RegLib</div>
<div class="item" style="top:344px;color:#000">Run</div>
<div class="item" style="top:358px;color:#000">Wait</div>
<div class="a" style="left:0;top:546px;width:1024px;height:24px;background:linear-gradient(#DFDBCB 0,#DFDBCB 2px,#CFCAB5 2px,#CFCAB5 3px,#fff 3px,#fff 4px,#F0EEE4 4px,#E8E5D6 23px,#DCD5BF 23px)"></div>
<div class="st" style="left:2px">939 字节 (939 字节), 36 行。</div>
<div class="st" style="left:723px;letter-spacing:-0.3px">VBScript</div>
<div class="st" style="left:780px;letter-spacing:-0.3px">行 13, 列 38</div>
<div class="st" style="left:855px;letter-spacing:-0.5px">简体中文(GB2312)</div>
<div class="ssep" style="left:774px"></div>
<div class="ssep" style="left:849px"></div>
<div class="ssep" style="left:958px"></div>
<div class="ssep" style="left:990px"></div>
<div class="ssep" style="left:1022px"></div>
<div class="a" style="left:0;top:570px;width:1024px;height:30px;background:linear-gradient(#2A58CC 0,#2A58CC 1px,#90B4F8 1px,#90B4F8 2px,#7096E0 2px,#4F70B8 13px,#1C3C84 14px,#17367C 30px)"></div>
<div class="a" style="left:835px;top:570px;width:189px;height:30px;background:linear-gradient(#3070E0 0,#3070E0 1px,#A8CCFF 1px,#A8CCFF 2px,#88B6F6 2px,#5E90D6 13px,#2E64B0 14px,#2A5AA6 30px)"></div>
<div class="a" style="left:0;top:570px;width:43px;height:30px;border-radius:0 5px 5px 0/0 15px 15px 0;background:linear-gradient(#1C7A1C 0,#1C7A1C 1px,#E0F8D8 1px,#90DC80 3px,#4CB444 5px,#3CA03A 14px,#1E6C14 14px,#1C6612 29px,#2A8A20 30px);box-shadow:inset -2px 0 0 #6CD060,inset 1px 0 0 #70D060"></div>
<svg style="left:11px;top:575px" width="20" height="19" viewBox="0 0 20 19"><path d="M4 1.5 Q7 0 11 1.5 L9.5 8 Q6 6.5 2.5 8Z" fill="#F85820"/><path d="M12 2 Q15.5 3.5 19.5 2 L18 8.5 Q14.5 10 10.5 8.5Z" fill="#88C830"/><path d="M2.2 8.8 Q6 7.3 9.2 8.8 L8 15.5 Q4.5 14 0.5 15.5Z" fill="#20A0F0"/><path d="M10.3 9.3 Q14 10.8 17.8 9.3 L16.5 16 Q12.5 17.5 9 16Z" fill="#F8D020"/></svg>
<svg style="left:54px;top:577px" width="16" height="16" viewBox="0 0 16 16"><path d="M1 3 Q4 1 7 3 L7 12 Q4 13 1 12z" fill="#30A840"/><path d="M8 4 L13 0 L13 8 L8 9z" fill="#E84020"/><path d="M2 14 L6 11 L15 10 L12 15 L4 15z" fill="#F0C030"/><circle cx="7" cy="8" r="3" fill="#2060B0"/><circle cx="7" cy="7.5" r="1.5" fill="#90C0F0"/></svg>
<svg style="left:79px;top:577px" width="16" height="16" viewBox="0 0 16 16"><rect x="1" y="1" width="13" height="14" rx="2" fill="#1878E0"/><path d="M11.5 4.5 Q9 2 6 3.5 Q3 5.5 3.5 9 Q4.5 13 8.5 13 Q11 13 12 11" stroke="#FFF8D0" stroke-width="2.2" fill="none"/><path d="M5 8 H11" stroke="#FFF8D0" stroke-width="2"/><circle cx="14" cy="5" r="1.2" fill="#F06020"/><path d="M6 9 l2 -1" stroke="#000" stroke-width="1"/></svg>
<svg style="left:104px;top:577px" width="16" height="16" viewBox="0 0 16 16"><ellipse cx="8" cy="6" rx="5" ry="5.5" fill="#111"/><ellipse cx="8" cy="11" rx="5.5" ry="4.5" fill="#111"/><ellipse cx="8" cy="11" rx="4" ry="3.8" fill="#fff"/><ellipse cx="6.5" cy="4.5" rx="1.3" ry="1.6" fill="#fff"/><ellipse cx="9.5" cy="4.5" rx="1.3" ry="1.6" fill="#fff"/><ellipse cx="8" cy="7" rx="3" ry="1.2" fill="#F8B000"/><path d="M3 8 Q8 10.5 13 8 L13 10 Q8 12 3 10z M5 9 l-1 5 l2 -1z" fill="#E02020"/><ellipse cx="5" cy="15" rx="2.5" ry="1" fill="#F0A000"/><ellipse cx="11" cy="15" rx="2.5" ry="1" fill="#F0A000"/></svg>
<div class="chevw" style="left:133px;top:577px"></div>
<div class="tbtn" style="left:150px;width:156px"></div>
<div class="tbtn" style="left:309px;width:158px;background:linear-gradient(#1E3C90,#12307A 10px,#0C2870 10px,#0A2468);border-color:#3E5EB4;box-shadow:inset 1px 1px 0 #0A1E58,0 -1px 0 #3858B0"></div>
<div class="tbtn" style="left:469px;width:157px"></div>
<svg style="left:158px;top:577px" width="16" height="14" viewBox="0 0 16 14"><path d="M0.5 2 q0 -1.5 1.5 -1.5 h4 l1.5 1.5 h6.5 q1.5 0 1.5 1.5 v8.5 q0 1.5 -1.5 1.5 h-12 q-1.5 0 -1.5 -1.5z" fill="#F0C850" stroke="#B88810"/><path d="M2.5 5.5 h12.5 l-1 7 h-12z" fill="#FFF0A8" stroke="#D8A830" stroke-width="0.8"/></svg>
<div class="tt" style="left:180px">MousExt</div>
<svg style="left:318px;top:577px" width="17" height="16" viewBox="0 0 17 16"><rect x="3" y="2" width="13" height="13" fill="#8A8AA8"/><rect x="1.5" y="0.5" width="13" height="13" fill="#FAFAFF" stroke="#B8B0E0"/><path d="M3.5 3.5h7M3.5 5.5h7M3.5 7.5h6M3.5 9.5h5" stroke="#A8A8E8"/><path d="M14.5 1 L8.5 13" stroke="#F0D020" stroke-width="2.4" stroke-dasharray="1.2 1.2"/><path d="M14.5 1 L8.5 13" stroke="#E04820" stroke-width="2.4" stroke-dasharray="1.2 1.2" stroke-dashoffset="1.2"/><circle cx="14.5" cy="1.5" r="1.3" fill="#E02020"/><path d="M8 12.5 l0.5 1.5 l1 -1z" fill="#000" stroke="#000"/></svg>
<div class="tt" style="left:339px">C:\暗盒\MousExt\tes...</div>
<svg style="left:478px;top:576px" width="16" height="16" viewBox="0 0 16 16"><path d="M3 6 L11 8 L11 15 L3 13z" fill="#fff" stroke="#000" stroke-width="1.2"/><path d="M4 5.5 L11 7.2" stroke="#20E0F0" stroke-width="1.5"/><circle cx="5" cy="1.5" r="1.2" fill="#20A020" stroke="#000" stroke-width="0.6"/><circle cx="1.5" cy="4.5" r="1.2" fill="#F0E020" stroke="#000" stroke-width="0.6"/><circle cx="5.5" cy="12" r="1" fill="#E02020"/><path d="M12 12 l3 -1 l-3 3z" fill="#A8A090"/></svg>
<div class="tt" style="left:498px">工程1 - Microsoft Vis...</div>
<svg style="left:807px;top:577px" width="14" height="14" viewBox="0 0 14 14"><path d="M3 1 v2 q1 1 2 0 q1 -1 2 0 q1 1 2 0 q1 -1 2 0" stroke="#000" fill="none" stroke-width="1"/><rect x="0.5" y="5.5" width="13" height="7" fill="#fff" stroke="#000"/><path d="M2 7.5h10M2 9.5h10" stroke="#222" stroke-dasharray="1 1"/></svg>
<div class="a" style="left:825px;top:576px;width:17px;height:17px;border-radius:50%;border:1px solid #7AA8F0;background:linear-gradient(#80B0F0,#5C90E0 50%,#3E74C8 50%,#3A6CC0)"></div>
<svg style="left:830px;top:581px" width="6" height="7" viewBox="0 0 6 7"><path d="M4.5 0.5 L1.5 3.5 L4.5 6.5" stroke="#fff" stroke-width="1.6" fill="none"/></svg>
<svg style="left:849px;top:577px" width="14" height="16" viewBox="0 0 14 16"><path d="M1 0 L4 4 L10 4 L13 0 L14 7 Q13 12 7 16 Q1 12 0 7z" fill="#F8F8F8" stroke="#888" stroke-width="0.5"/><ellipse cx="4" cy="9" rx="2.5" ry="1.5" fill="#111" transform="rotate(25 4 9)"/><ellipse cx="10" cy="9" rx="2.5" ry="1.5" fill="#111" transform="rotate(-25 10 9)"/><path d="M5 13 h4" stroke="#999"/></svg>
<svg style="left:868px;top:580px" width="14" height="12" viewBox="0 0 14 12"><path d="M0.5 1 L3 0.5 L4 2 L7 2 L8 1 L10 2 L11 8 L13 9 L10 11 L2 10z" fill="#fff" stroke="#000" stroke-width="1"/><rect x="3" y="1" width="2" height="2" fill="#20E0F0"/><rect x="7" y="1" width="2" height="2" fill="#20E0F0"/></svg>
<svg style="left:885px;top:577px" width="14" height="16" viewBox="0 0 14 16"><rect x="6" y="0.5" width="7" height="7" fill="#303860" stroke="#A0A8D8"/><rect x="1" y="4.5" width="7" height="7" fill="#303860" stroke="#A0A8D8"/><path d="M1 13 h7 l1 2 h-8z" fill="#B0B8F0"/><path d="M8 9 h6 v2 h-6z" fill="#9098D8"/></svg>
<svg style="left:903px;top:577px" width="16" height="16" viewBox="0 0 16 16"><ellipse cx="8" cy="6" rx="5" ry="5.5" fill="#111"/><ellipse cx="8" cy="11" rx="5.5" ry="4.5" fill="#111"/><ellipse cx="8" cy="11" rx="4" ry="3.8" fill="#fff"/><ellipse cx="6.5" cy="4.5" rx="1.3" ry="1.6" fill="#fff"/><ellipse cx="9.5" cy="4.5" rx="1.3" ry="1.6" fill="#fff"/><ellipse cx="8" cy="7" rx="3" ry="1.2" fill="#F8B000"/><path d="M3 8 Q8 10.5 13 8 L13 10 Q8 12 3 10z M5 9 l-1 5 l2 -1z" fill="#F020A0"/><ellipse cx="5" cy="15" rx="2.5" ry="1" fill="#F0A000"/><ellipse cx="11" cy="15" rx="2.5" ry="1" fill="#F0A000"/><path d="M11 2 l3 -1.5 v3z M11 2 l-1 -1.8 l2 0.5z" fill="#F040C0"/></svg>
<svg style="left:920px;top:577px" width="16" height="16" viewBox="0 0 16 16"><ellipse cx="8" cy="6" rx="5" ry="5.5" fill="#111"/><ellipse cx="8" cy="11" rx="5.5" ry="4.5" fill="#111"/><ellipse cx="8" cy="11" rx="4" ry="3.8" fill="#fff"/><ellipse cx="6.5" cy="4.5" rx="1.3" ry="1.6" fill="#fff"/><ellipse cx="9.5" cy="4.5" rx="1.3" ry="1.6" fill="#fff"/><ellipse cx="8" cy="7" rx="3" ry="1.2" fill="#F8B000"/><path d="M3 8 Q8 10.5 13 8 L13 10 Q8 12 3 10z M5 9 l-1 5 l2 -1z" fill="#E02020"/><ellipse cx="5" cy="15" rx="2.5" ry="1" fill="#F0A000"/><ellipse cx="11" cy="15" rx="2.5" ry="1" fill="#F0A000"/></svg>
<svg style="left:939px;top:578px" width="15" height="14" viewBox="0 0 15 14"><path d="M0.5 4.5 h3 l4.5 -4 v13 l-4.5 -4 h-3z" fill="#E86040" stroke="#000"/><path d="M10 3 q1.5 4 0 8 M12.5 1 q2.5 6 0 12" stroke="#000" stroke-width="1.2" fill="none"/></svg>
<svg style="left:956px;top:579px" width="16" height="15" viewBox="0 0 16 15"><circle cx="6" cy="6" r="5.5" fill="#707070"/><circle cx="6" cy="6" r="3" fill="#C0C0C0"/><circle cx="5" cy="5" r="1.5" fill="#F0F0F0"/><path d="M9 13 q4 -2 5 -5 M7 14 q6 -2 8 -7" stroke="#B8A8F0" stroke-width="1" fill="none"/></svg>
<div class="tt" style="left:981px;top:578px;font-size:12px">19:10</div>
</body></html>
